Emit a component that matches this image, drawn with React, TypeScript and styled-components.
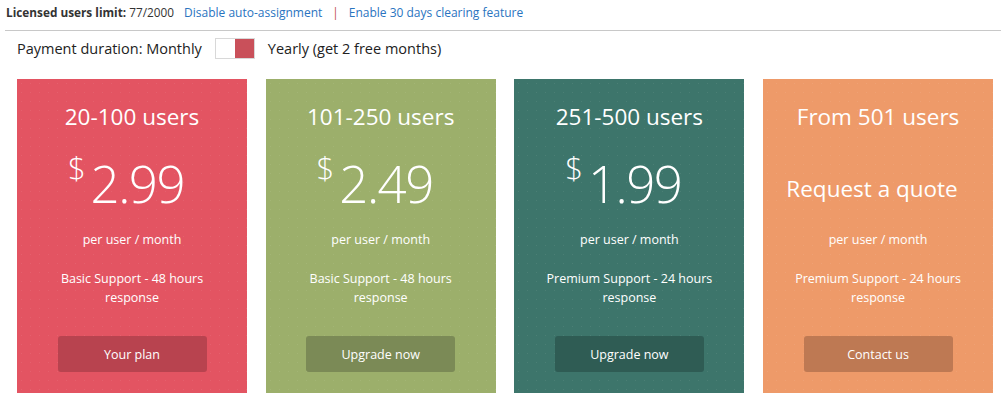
import styled, { createGlobalStyle } from 'styled-components';

const GlobalStyle = createGlobalStyle`
  body {
    margin: 0;
    background: #ffffff;
    font-family: "Open Sans", "Noto Sans", sans-serif;
    color: #222;
  }
`;

const Page = styled.main`
  width: 1001px;
  height: 411px;
  overflow: hidden;
`;

const LimitBar = styled.div`
  display: flex;
  align-items: center;
  gap: 10px;
  height: 24px;
  padding: 0 0 6px 1px;
  margin-left: 5px;
  font-size: 11.8px;
  color: #333;
  border-bottom: 1px solid #c8c8c8;
`;

const Label = styled.span`
  strong {
    font-weight: 700;
  }
`;

const Link = styled.a`
  color: #2a74bf;
  text-decoration: none;
  font-size: 12px;
  cursor: pointer;
`;

const Divider = styled.span`
  color: #c2504f;
`;

const DurationRow = styled.div`
  display: flex;
  align-items: center;
  height: 35px;
  padding: 0 17px;
  gap: 12px;
  font-size: 14.5px;
  color: #222;
`;

const Toggle = styled.div`
  display: flex;
  width: 40px;
  height: 21px;
  border: 1px solid #d8d8d8;
  box-sizing: border-box;
  margin: 0 1px 0 1px;
`;

const ToggleHalf = styled.span<{ $on?: boolean }>`
  flex: 1;
  background: ${(p) => (p.$on ? '#c9505a' : '#ffffff')};
`;

const Plans = styled.section`
  display: grid;
  grid-template-columns: repeat(4, 230px);
  column-gap: 18.7px;
  padding: 13px 0 0 17px;
`;

const Card = styled.div<{ $bg: string }>`
  height: 314px;
  box-sizing: border-box;
  padding-top: 23px;
  display: flex;
  flex-direction: column;
  align-items: center;
  color: #fff;
  text-align: center;
  background-color: ${(p) => p.$bg};
  background-image: radial-gradient(rgba(255, 255, 255, 0.07) 0.6px, transparent 0.8px);
  background-size: 9px 9px;
`;

const Title = styled.h2`
  margin: 0;
  height: 30px;
  line-height: 30px;
  font-size: 22.5px;
  font-weight: 400;
`;

const PriceBox = styled.div`
  height: 99px;
  display: flex;
  align-items: center;
  justify-content: center;
`;

const Price = styled.div`
  display: flex;
  align-items: flex-start;
  margin: 2px 12px 0 0;
`;

const Currency = styled.span`
  font-size: 31px;
  font-weight: 300;
  line-height: 30px;
  margin-right: 5px;
  margin-top: -6px;
`;

const Amount = styled.span`
  font-size: 51px;
  font-weight: 300;
  line-height: 50px;
  letter-spacing: -1.5px;
`;

const Quote = styled.span`
  font-size: 22.5px;
  line-height: 30px;
  margin: 14px 12px 0 0;
`;

const Period = styled.div`
  height: 18px;
  line-height: 18px;
  font-size: 12.5px;
`;

const Support = styled.div`
  margin-top: 20px;
  width: 190px;
  height: 38px;
  font-size: 12.5px;
  line-height: 19px;
`;

const ActionButton = styled.button<{ $bg: string }>`
  margin-top: 29px;
  width: 149px;
  height: 36px;
  border: none;
  border-radius: 3px;
  background: ${(p) => p.$bg};
  color: #fff;
  font-family: inherit;
  font-size: 12.5px;
  cursor: pointer;
`;

type Plan = {
  title: string;
  price?: string;
  support: string;
  action: string;
  bg: string;
  btn: string;
};

const plans: Plan[] = [
  { title: '20-100 users', price: '2.99', support: 'Basic Support - 48 hours response', action: 'Your plan', bg: '#e35462', btn: '#b8434f' },
  { title: '101-250 users', price: '2.49', support: 'Basic Support - 48 hours response', action: 'Upgrade now', bg: '#9caf6b', btn: '#7b8a56' },
  { title: '251-500 users', price: '1.99', support: 'Premium Support - 24 hours response', action: 'Upgrade now', bg: '#3d756b', btn: '#2f5c54' },
  { title: 'From 501 users', support: 'Premium Support - 24 hours response', action: 'Contact us', bg: '#ee9a69', btn: '#be7953' },
];

export default function App() {
  return (
    <Page>
      <GlobalStyle />
      <LimitBar>
        <Label>
          <strong>Licensed users limit:</strong> 77/2000
        </Label>
        <Link>Disable auto-assignment</Link>
        <Divider>|</Divider>
        <Link>Enable 30 days clearing feature</Link>
      </LimitBar>

      <DurationRow>
        <span>Payment duration: Monthly</span>
        <Toggle>
          <ToggleHalf />
          <ToggleHalf $on />
        </Toggle>
        <span>Yearly (get 2 free months)</span>
      </DurationRow>

      <Plans>
        {plans.map((plan) => (
          <Card key={plan.title} $bg={plan.bg}>
            <Title>{plan.title}</Title>
            <PriceBox>
              {plan.price ? (
                <Price>
                  <Currency>$</Currency>
                  <Amount>{plan.price}</Amount>
                </Price>
              ) : (
                <Quote>Request a quote</Quote>
              )}
            </PriceBox>
            <Period>per user / month</Period>
            <Support>{plan.support}</Support>
            <ActionButton $bg={plan.btn}>{plan.action}</ActionButton>
          </Card>
        ))}
      </Plans>
    </Page>
  );
}
